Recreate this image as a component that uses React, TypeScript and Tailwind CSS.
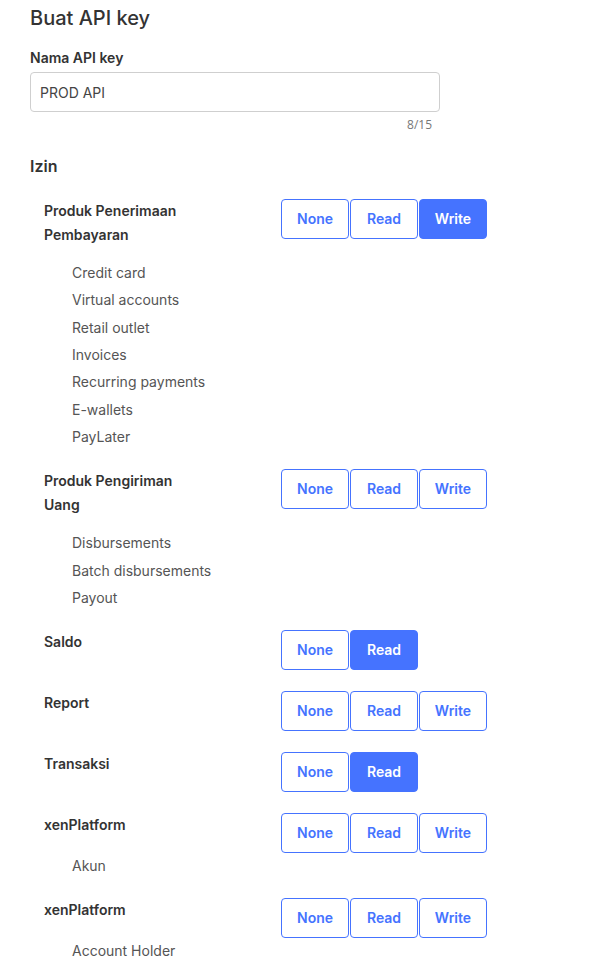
import { useState } from "react";

type Level = "None" | "Read" | "Write";

type Perm = {
  id: string;
  label: string;
  items: string[];
  options: Level[];
  value: Level | null;
};

const initialPerms: Perm[] = [
  {
    id: "pay-in",
    label: "Produk Penerimaan Pembayaran",
    items: ["Credit card", "Virtual accounts", "Retail outlet", "Invoices", "Recurring payments", "E-wallets", "PayLater"],
    options: ["None", "Read", "Write"],
    value: "Write",
  },
  {
    id: "pay-out",
    label: "Produk Pengiriman Uang",
    items: ["Disbursements", "Batch disbursements", "Payout"],
    options: ["None", "Read", "Write"],
    value: null,
  },
  { id: "saldo", label: "Saldo", items: [], options: ["None", "Read"], value: "Read" },
  { id: "report", label: "Report", items: [], options: ["None", "Read", "Write"], value: null },
  { id: "trx", label: "Transaksi", items: [], options: ["None", "Read"], value: "Read" },
  { id: "xp-akun", label: "xenPlatform", items: ["Akun"], options: ["None", "Read", "Write"], value: null },
  { id: "xp-holder", label: "xenPlatform", items: ["Account Holder"], options: ["None", "Read", "Write"], value: null },
];

function LevelPicker({ options, value, onChange }: { options: Level[]; value: Level | null; onChange: (v: Level) => void }) {
  return (
    <div className="flex gap-px">
      {options.map(opt => {
        const active = opt === value;
        return (
          <button
            key={opt}
            type="button"
            onClick={() => onChange(opt)}
            className={
              active
                ? "w-[68px] h-10 rounded-[4px] border border-[#4573ff] bg-[#4573ff] text-white text-sm font-semibold"
                : "w-[68px] h-10 rounded-[4px] border border-[#4573ff] bg-white text-[#4573ff] text-sm font-semibold"
            }
          >
            {opt}
          </button>
        );
      })}
    </div>
  );
}

export default function App() {
  const [name, setName] = useState("PROD API");
  const [perms, setPerms] = useState(initialPerms);

  function setLevel(id: string, v: Level) {
    setPerms(ps => ps.map(p => (p.id === id ? { ...p, value: v } : p)));
  }

  return (
    <div className="min-h-screen bg-white px-[30px] pt-1 text-[#333] font-['Inter',sans-serif]">
      <h1 className="text-xl leading-7 font-medium text-[#333]">Buat API key</h1>

      <div className="mt-4 w-[410px]">
        <label className="block text-sm leading-5 font-semibold mb-1">Nama API key</label>
        <input
          value={name}
          maxLength={15}
          onChange={e => setName(e.target.value)}
          className="w-full h-10 rounded-[4px] border border-[#cfcfcf] px-[9px] text-sm text-[#444] outline-none"
        />
        <div className="mt-[5px] pr-2 text-right text-xs leading-4 text-[#777] font-['Open_Sans',sans-serif]">
          {name.length}/15
        </div>
      </div>

      <h2 className="mt-[21px] text-base leading-6 font-semibold">Izin</h2>

      <div className="mt-[21px] pl-[14px]">
        {perms.map(p => (
          <div key={p.id} className="flex items-start mb-[21px]">
            <div className="w-[237px]">
              <div className="max-w-[165px] text-sm leading-6 font-semibold text-[#333]">{p.label}</div>
              {p.items.length > 0 && (
                <ul className={p.items.length === 1 ? "mt-[15px] mb-[-3px] pl-7" : "mt-3 mb-[-2px] pl-7"}>
                  {p.items.map(it => (
                    <li key={it} className="text-sm leading-[27.33px] text-[#555]">{it}</li>
                  ))}
                </ul>
              )}
            </div>
            <LevelPicker options={p.options} value={p.value} onChange={v => setLevel(p.id, v)} />
          </div>
        ))}
      </div>
    </div>
  );
}
